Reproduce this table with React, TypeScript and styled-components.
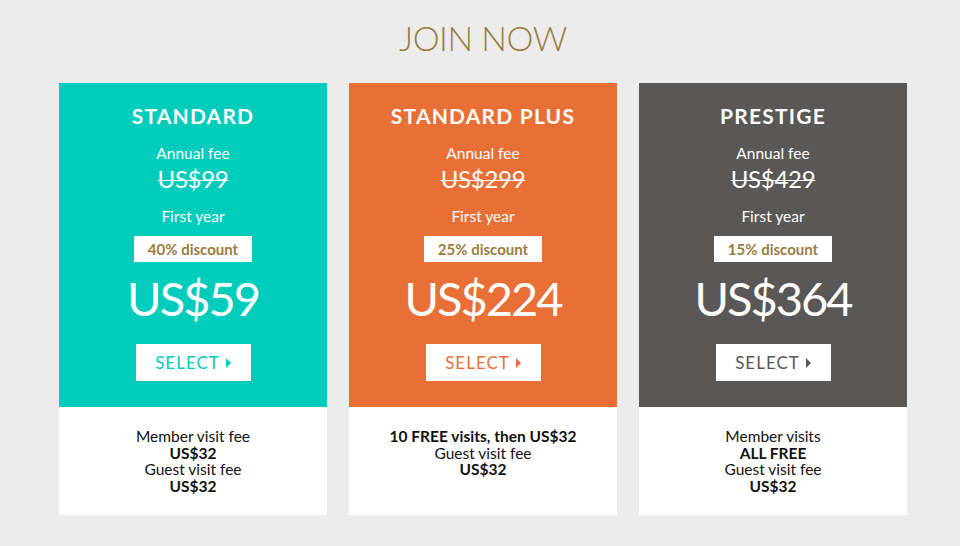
import * as React from "react";
import styled, { createGlobalStyle } from "styled-components";

interface Iplan {
  name: string;
  color: string;
  oldPrice: string;
  discount: string;
  price: string;
  perks: { text: string; bold?: boolean }[];
}

const plans: Iplan[] = [
  {
    name: "STANDARD",
    color: "#00ccbc",
    oldPrice: "US$99",
    discount: "40% discount",
    price: "US$59",
    perks: [
      { text: "Member visit fee" },
      { text: "US$32", bold: true },
      { text: "Guest visit fee" },
      { text: "US$32", bold: true },
    ],
  },
  {
    name: "STANDARD PLUS",
    color: "#e87037",
    oldPrice: "US$299",
    discount: "25% discount",
    price: "US$224",
    perks: [
      { text: "10 FREE visits, then US$32", bold: true },
      { text: "Guest visit fee" },
      { text: "US$32", bold: true },
    ],
  },
  {
    name: "PRESTIGE",
    color: "#5a5856",
    oldPrice: "US$429",
    discount: "15% discount",
    price: "US$364",
    perks: [
      { text: "Member visits" },
      { text: "ALL FREE", bold: true },
      { text: "Guest visit fee" },
      { text: "US$32", bold: true },
    ],
  },
];

const App = (): JSX.Element => {
  return (
    <Wrapper>
      <GlobalStyle />
      <Title>JOIN NOW</Title>
      <Plans>
        {plans.map((plan) => {
          return (
            <Card.Box key={plan.name}>
              <Card.Top $color={plan.color}>
                <Card.Name>{plan.name}</Card.Name>
                <Card.Label>Annual fee</Card.Label>
                <Card.OldPrice>{plan.oldPrice}</Card.OldPrice>
                <Card.Label $gap={15}>First year</Card.Label>
                <Card.Discount>{plan.discount}</Card.Discount>
                <Card.Price>{plan.price}</Card.Price>
                <Card.Button $color={plan.color}>
                  SELECT
                  <Card.Arrow $color={plan.color} />
                </Card.Button>
              </Card.Top>
              <Card.Bottom>
                {plan.perks.map((perk, i) => (
                  <Card.Perk key={i} $bold={perk.bold}>
                    {perk.text}
                  </Card.Perk>
                ))}
              </Card.Bottom>
            </Card.Box>
          );
        })}
      </Plans>
    </Wrapper>
  );
};

export default App;

const GlobalStyle = createGlobalStyle`
  body {
    margin: 0;
    background: #ececec;
    font-family: Lato, "Open Sans", sans-serif;
  }
`;

const Wrapper = styled.div`
  width: 960px;
  height: 546px;
  padding-top: 15px;
  box-sizing: border-box;
`;

const Title = styled.h1`
  margin: 0 0 22px;
  padding-left: 6px;
  text-align: center;
  font-size: 34px;
  font-weight: 300;
  line-height: 46px;
  letter-spacing: -0.5px;
  color: #9a7d3e;
`;

const Plans = styled.div`
  display: grid;
  grid-template-columns: repeat(3, 268px);
  gap: 22px;
  margin-left: 59px;
`;

const Card = {
  Box: styled.div`
    display: flex;
    flex-direction: column;
    background: #fff;
  `,

  Top: styled.div<{ $color: string }>`
    display: flex;
    flex-direction: column;
    align-items: center;
    padding: 20px 0 26px;
    background: ${(p) => p.$color};
    color: #fff;
  `,

  Name: styled.h2`
    margin: 0;
    font-size: 21px;
    font-weight: 700;
    letter-spacing: 1.2px;
    line-height: 26px;
  `,

  Label: styled.div<{ $gap?: number }>`
    margin-top: ${(p) => p.$gap ?? 15}px;
    font-size: 15.5px;
    line-height: 18px;
  `,

  OldPrice: styled.div`
    margin-top: 4px;
    font-size: 24px;
    font-weight: 400;
    line-height: 26px;
    letter-spacing: -0.3px;
    text-decoration: line-through;
    text-decoration-thickness: 1px;
  `,

  Discount: styled.div`
    margin-top: 11px;
    height: 26px;
    padding: 0 14px;
    background: #fff;
    color: #9a7d3e;
    font-size: 15px;
    font-weight: 700;
    line-height: 26px;
  `,

  Price: styled.div`
    margin-top: 8px;
    font-size: 47px;
    font-weight: 400;
    line-height: 56px;
    letter-spacing: -2px;
  `,

  Button: styled.div<{ $color: string }>`
    display: flex;
    align-items: center;
    justify-content: center;
    gap: 6px;
    margin-top: 18px;
    width: 115px;
    height: 37px;
    background: #fff;
    color: ${(p) => p.$color};
    font-size: 17px;
    letter-spacing: 1px;
  `,

  Arrow: styled.span<{ $color: string }>`
    width: 0;
    height: 0;
    border-top: 5px solid transparent;
    border-bottom: 5px solid transparent;
    border-left: 5px solid ${(p) => p.$color};
  `,

  Bottom: styled.div`
    height: 108px;
    box-sizing: border-box;
    padding-top: 21px;
    text-align: center;
    color: #111;
  `,

  Perk: styled.div<{ $bold?: boolean }>`
    font-size: 15.5px;
    line-height: 16.5px;
    font-weight: ${(p) => (p.$bold ? 700 : 400)};
  `,
};
